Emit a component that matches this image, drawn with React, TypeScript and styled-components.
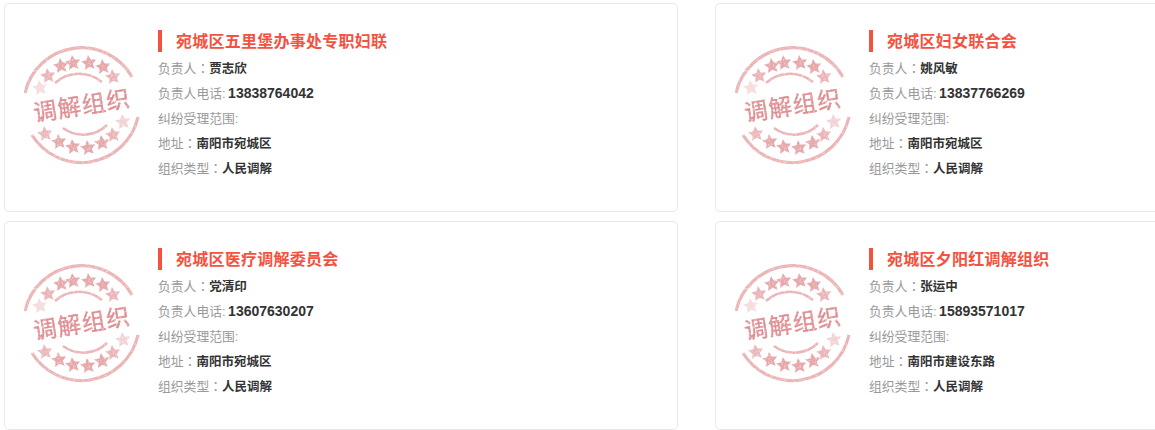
import React from 'react';
import styled, { createGlobalStyle } from 'styled-components';

const GlobalStyles = createGlobalStyle`
  html, body {
    margin: 0;
    padding: 0;
    height: 100%;
    overflow: hidden;
    background: #fff;
    font-family: "Liberation Sans", "Noto Sans CJK TC", sans-serif;
  }
`;

const Grid = styled.div`
  display: grid;
  grid-template-columns: 674px 674px;
  grid-auto-rows: 209px;
  column-gap: 37px;
  row-gap: 9px;
  padding: 3px 0 0 4px;
  width: 1500px;
`;

const Card = styled.div`
  box-sizing: border-box;
  display: flex;
  border: 1px solid #e8e8e8;
  border-radius: 5px;
  background: #fff;
  padding: 26px 0 0 19px;
`;

const StampBox = styled.div`
  width: 116px;
  height: 120px;
  margin: 16px 18px 0 0;
  flex: none;
`;

const Info = styled.div`
  display: flex;
  flex-direction: column;
`;

const Title = styled.h3`
  margin: 0 0 4px;
  height: 22px;
  line-height: 24px;
  border-left: 4px solid #f4523f;
  padding-left: 14px;
  font-size: 16px;
  letter-spacing: 0.25px;
  font-weight: 700;
  color: #f4523f;
`;

const Row = styled.div`
  height: 25px;
  line-height: 25px;
  font-size: 12.8px;
  color: #999;
  white-space: nowrap;
`;

const Value = styled.span`
  font-size: 12.5px;
  font-weight: 700;
  color: #333;
`;

const Phone = styled(Value)`
  font-size: 14px;
  margin-left: -1px;
`;

const topStars = [[-42, -18, 0.4], [-34, -30, 0.85], [-21, -40, 1], [-9, -43, 1], [7, -43, 1], [21, -39, 1], [31, -29, 0.85]];
const bottomStars = [[-37, 28, 0.8], [-23, 36, 1], [-9, 41, 1], [6, 42, 1], [20, 37, 1], [31, 29, 0.85], [41, 16, 0.5]];

const starPoints = (cx: number, cy: number, r: number) => {
  const pts: string[] = [];
  for (let i = 0; i < 10; i++) {
    const rad = i % 2 === 0 ? r : r * 0.48;
    const a = (Math.PI / 5) * i - Math.PI / 2 - 0.14;
    pts.push(`${(cx + rad * Math.cos(a)).toFixed(1)},${(cy + rad * Math.sin(a)).toFixed(1)}`);
  }
  return pts.join(' ');
};

function Stamp({ id }: { id: string }) {
  return (
    <StampBox>
      <svg width="116" height="120" viewBox="-58 -60 116 120">
        <defs>
          {/* worn ink: speckle the shapes with noise, then soften */}
          <filter id={id} x="-10%" y="-10%" width="120%" height="120%">
            <feTurbulence type="fractalNoise" baseFrequency="0.45" numOctaves="2" seed="4" result="noise" />
            <feColorMatrix in="noise" type="matrix" values="0 0 0 0 0  0 0 0 0 0  0 0 0 0 0  0 0 0 -1.5 1.75" result="mask" />
            <feComposite in="SourceGraphic" in2="mask" operator="in" />
            <feGaussianBlur stdDeviation="0.65" />
          </filter>
        </defs>
        <g filter={`url(#${id})`} fill="none" stroke="#ebb4b6">
          <path d="M-57 -13 A58 58 0 0 1 50 -29" strokeWidth="3.2" />
          <path d="M-50 29 A58 58 0 0 0 56 11" strokeWidth="3.2" />
          <path d="M-27 -23 A36 36 0 0 1 20 -24" strokeWidth="2.6" />
          <path d="M-19 22 A34 34 0 0 0 25 19" strokeWidth="2.6" />
          {[...topStars, ...bottomStars].map(([x, y, o], i) => (
            <polygon key={i} points={starPoints(x, y, 8)} fill="#e6a8ab" stroke="none" opacity={o} />
          ))}
          <text
            x="0"
            y="8"
            textAnchor="middle"
            transform="rotate(-9 0 0)"
            fontFamily='"Noto Sans CJK SC", sans-serif'
            fontSize="23.5"
            letterSpacing="1"
            fill="#de8c90"
            stroke="#de8c90"
            strokeWidth="0.4"
          >
            调解组织
          </text>
        </g>
      </svg>
    </StampBox>
  );
}

const orgs = [
  { name: '宛城区五里堡办事处专职妇联', head: '贾志欣', phone: '13838764042', address: '南阳市宛城区' },
  { name: '宛城区妇女联合会', head: '姚风敏', phone: '13837766269', address: '南阳市宛城区' },
  { name: '宛城区医疗调解委员会', head: '党清印', phone: '13607630207', address: '南阳市宛城区' },
  { name: '宛城区夕阳红调解组织', head: '张运中', phone: '15893571017', address: '南阳市建设东路' },
];

function App() {
  return (
    <>
      <GlobalStyles />
      <Grid>
        {orgs.map((org, i) => (
          <Card key={org.name}>
            <Stamp id={`rough-${i}`} />
            <Info>
              <Title>{org.name}</Title>
              <Row>负责人：<Value>{org.head}</Value></Row>
              <Row>负责人电话: <Phone>{org.phone}</Phone></Row>
              <Row>纠纷受理范围:</Row>
              <Row>地址：<Value>{org.address}</Value></Row>
              <Row>组织类型：<Value>人民调解</Value></Row>
            </Info>
          </Card>
        ))}
      </Grid>
    </>
  );
}

export default App;
